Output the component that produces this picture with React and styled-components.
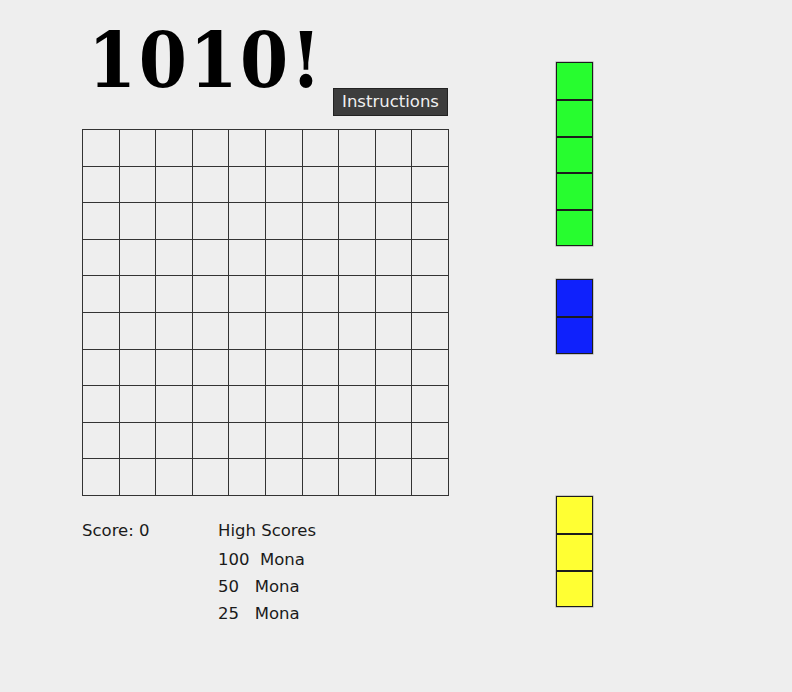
import React from 'react';
import styled, { createGlobalStyle } from 'styled-components';

const GlobalStyle = createGlobalStyle`
  html, body {
    margin: 0;
    padding: 0;
    background: #eeeeee;
  }
  body {
    font-family: "DejaVu Sans", "Liberation Sans", sans-serif;
    color: #1a1a1a;
  }
`;

const Page = styled.div`
  display: flex;
  align-items: flex-start;
  width: 792px;
  height: 692px;
  padding-left: 82px;
  box-sizing: border-box;
  overflow: hidden;
`;

const Board = styled.div`
  display: flex;
  flex-direction: column;
  width: 367px;
`;

const Header = styled.div`
  display: flex;
  justify-content: space-between;
  align-items: flex-start;
  padding-top: 11px;
`;

const Title = styled.h1`
  margin: 2px 0 0 6px;
  font-family: "DejaVu Serif", "Liberation Serif", serif;
  font-stretch: condensed;
  font-weight: bold;
  font-size: 77px;
  line-height: 94px;
  letter-spacing: 2.5px;
  color: #000;
`;

const Button = styled.button`
  margin: 77px 1px 0 0;
  width: 115px;
  height: 28px;
  padding: 0;
  box-sizing: border-box;
  background: #3d3d3d;
  border: 1px solid #222;
  color: #f0f0f0;
  font-family: "DejaVu Sans", sans-serif;
  font-size: 16.5px;
  line-height: 26px;
  cursor: pointer;
`;

const Grid = styled.div`
  margin-top: 13px;
  display: grid;
  grid-template-columns: repeat(10, 1fr);
  grid-template-rows: repeat(10, 1fr);
  width: 367px;
  height: 367px;
  box-sizing: border-box;
  border-left: 1px solid #333;
  border-top: 1px solid #333;
`;

const Cell = styled.div`
  border-right: 1px solid #333;
  border-bottom: 1px solid #333;
  background: ${p => p.$color || 'transparent'};
`;

const Footer = styled.div`
  display: flex;
  margin-top: 21px;
  font-size: 16.5px;
  line-height: 27px;
`;

const ScoreLabel = styled.div`
  width: 136px;
`;

const HighScores = styled.div`
  display: flex;
  flex-direction: column;
`;

const ScoreList = styled.div`
  margin-top: 2px;
`;

const ScoreRow = styled.div`
  white-space: pre;
`;

const Tray = styled.div`
  display: flex;
  flex-direction: column;
  align-items: flex-start;
  margin-left: 107px;
  padding-top: 62px;
`;

const Piece = styled.div`
  display: flex;
  flex-direction: column;
  margin-top: ${p => p.$offset}px;
  width: 37px;
  box-sizing: border-box;
  border: 1.5px solid #1c1c1c;
  box-shadow: 0 0 0 0.5px rgba(0, 0, 0, 0.35);
  background: ${p => p.$color};
`;

const Block = styled.div`
  height: 36.4px;
  box-sizing: border-box;
  & + & {
    border-top: 2px solid #1c1c1c;
  }
`;

const pieces = [
  { color: '#27fd2f', size: 5, offset: 0 },
  { color: '#0f21fc', size: 2, offset: 33 },
  { color: '#ffff33', size: 3, offset: 142 },
];

const highScores = ['100  Mona', '50   Mona', '25   Mona'];

export default function App() {
  return (
    <>
      <GlobalStyle />
      <Page>
        <Board>
          <Header>
            <Title>1010!</Title>
            <Button>Instructions</Button>
          </Header>
          <Grid>
            {Array.from({ length: 100 }, (_, i) => (
              <Cell key={i} />
            ))}
          </Grid>
          <Footer>
            <ScoreLabel>Score: 0</ScoreLabel>
            <HighScores>
              <div>High Scores</div>
              <ScoreList>
                {highScores.map(row => (
                  <ScoreRow key={row}>{row}</ScoreRow>
                ))}
              </ScoreList>
            </HighScores>
          </Footer>
        </Board>
        <Tray>
          {pieces.map((p, i) => (
            <Piece key={i} $color={p.color} $offset={p.offset}>
              {Array.from({ length: p.size }, (_, j) => (
                <Block key={j} />
              ))}
            </Piece>
          ))}
        </Tray>
      </Page>
    </>
  );
}
